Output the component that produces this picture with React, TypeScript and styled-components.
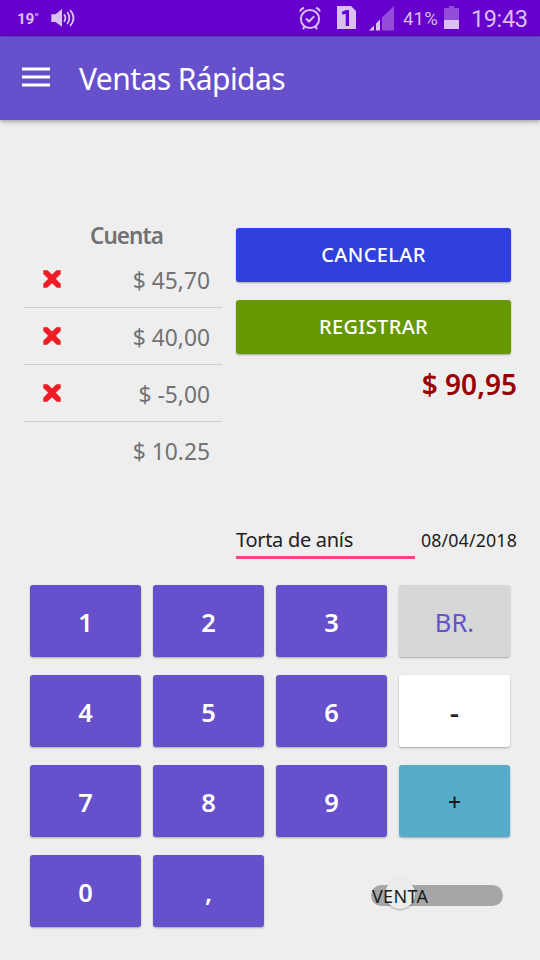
import React from "react";
import styled, { createGlobalStyle } from "styled-components";

const GlobalStyle = createGlobalStyle`
  * { box-sizing: border-box; }
  body { margin: 0; background: #eeeeee; }
  button, input { font-family: inherit; border: 0; padding: 0; margin: 0; }
`;

const Screen = styled.div`
  width: 540px;
  height: 960px;
  overflow: hidden;
  display: flex;
  flex-direction: column;
  background: #eeeeee;
  font-family: "Noto Sans", "Open Sans", sans-serif;
  white-space: nowrap;
`;

const StatusBar = styled.header`
  height: 36px;
  flex: none;
  display: flex;
  justify-content: space-between;
  padding: 0 12px 0 17px;
  background: #6600cc;
  color: #d9bff2;
  font-family: Roboto, sans-serif;
`;

const StatusGroup = styled.div`
  display: flex;
  align-items: center;
`;

const Temperature = styled.span`
  width: 34px;
  font-size: 15.5px;
  font-weight: 700;
  letter-spacing: -0.4px;
  padding-top: 1px;
`;

const BatteryText = styled.span`
  width: 41px;
  font-size: 18.5px;
  padding-top: 2px;
  letter-spacing: 0.2px;
`;

const Clock = styled.span`
  width: 57px;
  font-size: 23.5px;
  letter-spacing: -0.4px;
  padding-top: 2px;
`;

const StatusIcon = styled.svg<{ $gap: number }>`
  display: block;
  flex: none;
  margin-right: ${(p) => p.$gap}px;
`;

const AppBar = styled.div`
  height: 84px;
  flex: none;
  display: flex;
  align-items: center;
  gap: 29px;
  padding: 0 22px;
  background: #6750cc;
  box-shadow: 0 1px 5px rgba(0, 0, 0, 0.42), inset 0 1px 0 rgba(70, 20, 160, 0.3);
`;

const Title = styled.h1`
  margin: 0;
  padding-top: 2px;
  font-size: 30px;
  font-weight: 400;
  line-height: 40px;
  letter-spacing: -0.57px;
  color: #fff;
`;

const Summary = styled.main`
  height: 351px;
  margin-top: 102px;
  padding-left: 24px;
  display: grid;
  grid-template-columns: 198px 281px;
  column-gap: 14px;
`;

const Account = styled.section`
  color: #727272;
`;

const AccountTitle = styled.h2`
  margin: 0;
  height: 29px;
  padding-left: 7px;
  text-align: center;
  font-size: 22.5px;
  font-weight: 600;
  line-height: 28px;
  letter-spacing: -0.9px;
`;

const Entry = styled.div<{ $last?: boolean }>`
  height: 57px;
  display: flex;
  align-items: center;
  padding: 0 12px 0 18px;
  border-bottom: 1px solid ${(p) => (p.$last ? "transparent" : "#cecece")};
`;

const Amount = styled.span`
  margin-left: auto;
  padding-top: 4px;
  font-size: 22.8px;
  line-height: 30px;
`;

const Actions = styled.section`
  display: flex;
  flex-direction: column;
  padding-top: 6px;
`;

const ActionButton = styled.button<{ $color: string }>`
  width: 275px;
  height: 54px;
  flex: none;
  margin-bottom: 18px;
  padding-bottom: 2px;
  border-radius: 3px;
  background: ${(p) => p.$color};
  box-shadow: 0 1px 2px rgba(0, 0, 0, 0.3);
  color: #fff;
  font-size: 20px;
  font-weight: 500;
  letter-spacing: 0.35px;
`;

const Total = styled.div`
  margin-top: -8px;
  text-align: right;
  font-size: 28px;
  font-weight: 600;
  line-height: 40px;
  color: #990000;
`;

const DetailRow = styled.div`
  margin-top: 122px;
  height: 33px;
  display: flex;
  justify-content: space-between;
  color: #212121;
`;

const ProductInput = styled.input`
  width: 179px;
  height: 33px;
  padding-bottom: 3px;
  background: transparent;
  border-bottom: 3px solid #ff4081;
  outline: none;
  color: inherit;
  font-size: 20px;
  letter-spacing: -0.3px;
`;

const DateText = styled.span`
  font-size: 17.8px;
  line-height: 29px;
  letter-spacing: 0.15px;
`;

const Keypad = styled.section`
  display: grid;
  grid-template-columns: repeat(4, 111px);
  grid-auto-rows: 72px;
  gap: 18px 12px;
  padding: 12px 0 0 30px;
`;

const tones = {
  digit: { bg: "#6750cc", fg: "#ffffff", weight: 600 },
  bill: { bg: "#d6d8d7", fg: "#6750cc", weight: 400 },
  minus: { bg: "#ffffff", fg: "#212121", weight: 500 },
  plus: { bg: "#56acca", fg: "#151c20", weight: 500 },
};
type Tone = keyof typeof tones;

const Key = styled.button<{ $tone: Tone }>`
  border-radius: 3px;
  background: ${(p) => tones[p.$tone].bg};
  color: ${(p) => tones[p.$tone].fg};
  font-weight: ${(p) => tones[p.$tone].weight};
  font-size: ${(p) => (p.$tone === "plus" ? 23 : p.$tone === "minus" ? 29 : 25.5)}px;
  line-height: 36px;
  padding-top: ${(p) => (p.$tone === "plus" || p.$tone === "minus" ? 2 : 1)}px;
  box-shadow: 0 1px 2px rgba(0, 0, 0, 0.3);
`;

const SwitchCell = styled.div`
  grid-column: 3 / 5;
  display: flex;
  align-items: center;
  justify-content: flex-end;
  padding: 9px 7px 0 0;
`;

const Switch = styled.button`
  position: relative;
  width: 132px;
  height: 21px;
  border-radius: 11px;
  background: #a6a6a6;
  text-align: left;
`;

const Thumb = styled.span`
  position: absolute;
  left: 14px;
  top: -6px;
  width: 30px;
  height: 30px;
  border-radius: 50%;
  background: #ececec;
  box-shadow: 0 1px 2px rgba(0, 0, 0, 0.3);
`;

const SwitchLabel = styled.span`
  position: relative;
  display: block;
  padding-left: 1px;
  font-size: 18px;
  line-height: 20px;
  letter-spacing: 0.3px;
  color: #1c1c1c;
`;

const SoundIcon = () => (
  <StatusIcon $gap={0} width="25" height="20" viewBox="0 0 25 20" fill="none" stroke="#d9bff2" strokeWidth="1.8">
    <path d="M0.3 6.2H4.5L11 1V18.8L4.5 14H0.3Z" fill="#d9bff2" stroke="none" />
    <path d="M13 6.3Q15.8 10 13 13.8M16.2 4Q20.5 10 16.2 16M19 2Q26 10 19 18" />
  </StatusIcon>
);

const AlarmIcon = () => (
  <StatusIcon $gap={16} width="22" height="24" viewBox="0 0 22 24" fill="none" stroke="#d9bff2" strokeWidth="2">
    <circle cx="11" cy="13" r="9.1" />
    <path d="M7 12.5L10 15.5L15.3 10.3" />
    <path d="M1 5.5Q2 2.7 5 1.8M21 5.5Q20 2.7 17 1.8M5.5 20.5L4 23.2M16.5 20.5L18 23.2" />
  </StatusIcon>
);

const SimIcon = () => (
  <StatusIcon $gap={13} width="19" height="24" viewBox="0 0 19 24">
    <path d="M0 0H14L19 5V23H0Z" fill="#d9bff2" />
    <path d="M5 8.4V5.8L9.3 4H12V20H8.7V8Z" fill="#6600cc" />
  </StatusIcon>
);

const SignalIcon = () => (
  <StatusIcon $gap={9} width="25" height="25" viewBox="0 0 25 25">
    <path d="M0 24.5L5 19.5V24.5Z M7 24.5V17.5L11 13.5V24.5Z" fill="#d9bff2" />
    <path d="M13 24.5V11.5L25 0V24.5Z" fill="#944cdb" />
  </StatusIcon>
);

const BatteryIcon = () => (
  <StatusIcon $gap={12} width="15" height="25" viewBox="0 0 15 25">
    <path d="M0 2H5V0H10V2H15V14H0Z" fill="#944cdb" />
    <path d="M0 14H15V23H0Z" fill="#d9bff2" />
  </StatusIcon>
);

const MenuIcon = () => (
  <svg width="28" height="22" viewBox="0 0 28 22" fill="#fff">
    <path d="M0 1H28V3H0ZM0 9H28V11H0ZM0 17H28V19H0Z" />
    <path d="M0 0H28V4H0ZM0 8H28V12H0ZM0 16H28V20H0Z" fillOpacity="0.5" />
  </svg>
);

const DeleteIcon = () => (
  <svg width="20" height="20" viewBox="0 0 20 20">
    <path
      d="M1.3 1.3H5.6L10 5.5L14.4 1.3H18.7V4.9L13.8 9.8L18.7 14.8V18.7H14.8L10 14.2L5.2 18.7H1.3V14.8L6.2 9.8L1.3 4.9Z"
      fill="#ee1c25"
    />
  </svg>
);

const entries = ["$ 45,70", "$ 40,00", "$ -5,00"];

const keys: { label: string; tone: Tone }[] = [
  { label: "1", tone: "digit" },
  { label: "2", tone: "digit" },
  { label: "3", tone: "digit" },
  { label: "BR.", tone: "bill" },
  { label: "4", tone: "digit" },
  { label: "5", tone: "digit" },
  { label: "6", tone: "digit" },
  { label: "-", tone: "minus" },
  { label: "7", tone: "digit" },
  { label: "8", tone: "digit" },
  { label: "9", tone: "digit" },
  { label: "+", tone: "plus" },
  { label: "0", tone: "digit" },
  { label: ",", tone: "digit" },
];

export default function App() {
  return (
    <>
      <GlobalStyle />
      <Screen>
        <StatusBar>
          <StatusGroup>
            <Temperature>19˚</Temperature>
            <SoundIcon />
          </StatusGroup>
          <StatusGroup>
            <AlarmIcon />
            <SimIcon />
            <SignalIcon />
            <BatteryText>41%</BatteryText>
            <BatteryIcon />
            <Clock>19:43</Clock>
          </StatusGroup>
        </StatusBar>
        <AppBar>
          <MenuIcon />
          <Title>Ventas Rápidas</Title>
        </AppBar>
        <Summary>
          <Account>
            <AccountTitle>Cuenta</AccountTitle>
            {entries.map((amount) => (
              <Entry key={amount}>
                <DeleteIcon />
                <Amount>{amount}</Amount>
              </Entry>
            ))}
            <Entry $last>
              <Amount>$ 10.25</Amount>
            </Entry>
          </Account>
          <Actions>
            <ActionButton $color="#3040dc">CANCELAR</ActionButton>
            <ActionButton $color="#669900">REGISTRAR</ActionButton>
            <Total>$ 90,95</Total>
            <DetailRow>
              <ProductInput defaultValue="Torta de anís" />
              <DateText>08/04/2018</DateText>
            </DetailRow>
          </Actions>
        </Summary>
        <Keypad>
          {keys.map((key) => (
            <Key key={key.label} $tone={key.tone}>
              {key.label}
            </Key>
          ))}
          <SwitchCell>
            <Switch>
              <Thumb />
              <SwitchLabel>VENTA</SwitchLabel>
            </Switch>
          </SwitchCell>
        </Keypad>
      </Screen>
    </>
  );
}
